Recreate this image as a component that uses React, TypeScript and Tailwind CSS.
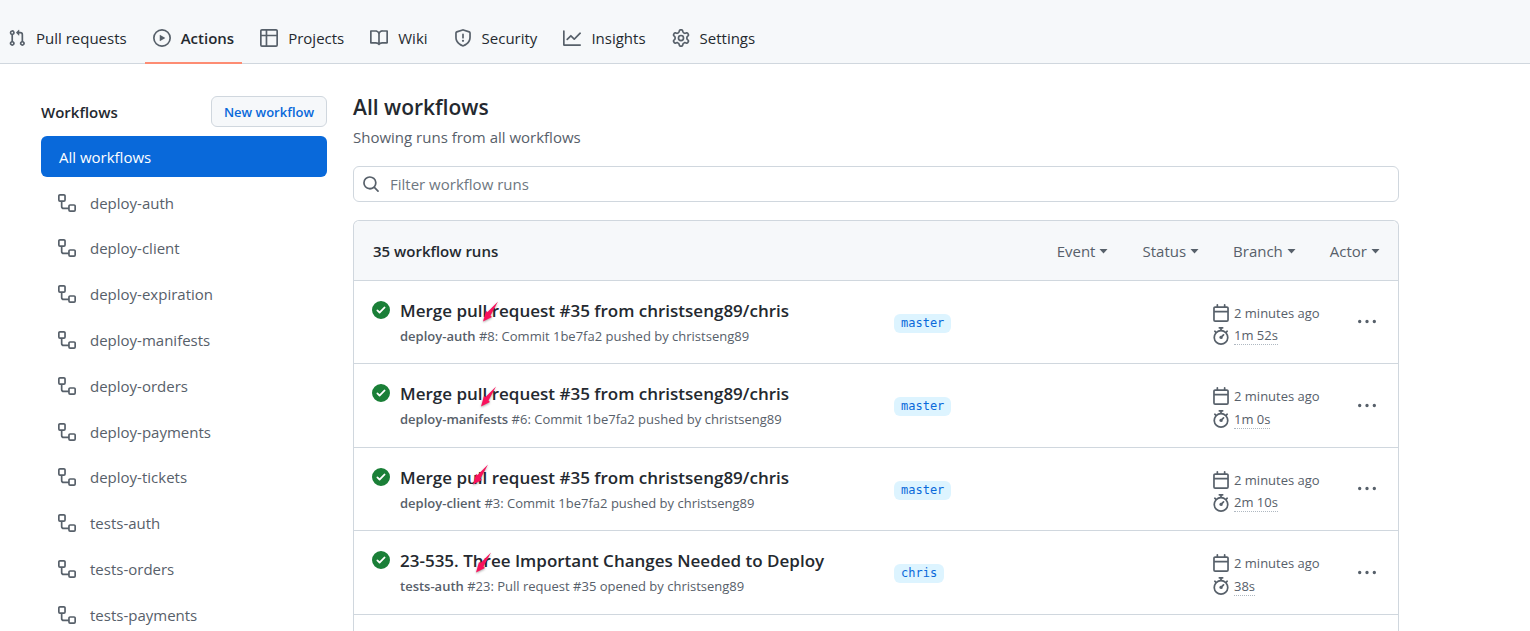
import type { ReactNode } from "react";

const icons = {
  pull: "M7.177 3.073L9.573.677A.25.25 0 0110 .854v4.792a.25.25 0 01-.427.177L7.177 3.427a.25.25 0 010-.354zM3.75 2.5a.75.75 0 100 1.5.75.75 0 000-1.5zm-2.25.75a2.25 2.25 0 113 2.122v5.256a2.251 2.251 0 11-1.5 0V5.372A2.25 2.25 0 011.5 3.25zM11 2.5h-1V4h1a1 1 0 011 1v5.628a2.251 2.251 0 101.5 0V5A2.5 2.5 0 0011 2.5zm1 10.25a.75.75 0 111.5 0 .75.75 0 01-1.5 0zM3.75 12a.75.75 0 100 1.5.75.75 0 000-1.5z",
  play: "M1.5 8a6.5 6.5 0 1113 0 6.5 6.5 0 01-13 0zM8 0a8 8 0 100 16A8 8 0 008 0zM6.379 5.227A.25.25 0 006 5.442v5.117a.25.25 0 00.379.214l4.264-2.559a.25.25 0 000-.428L6.379 5.227z",
  table: "M0 1.75C0 .784.784 0 1.75 0h12.5C15.216 0 16 .784 16 1.75v12.5A1.75 1.75 0 0 1 14.25 16H1.75A1.75 1.75 0 0 1 0 14.25ZM6.5 6.5v8h7.75a.25.25 0 0 0 .25-.25V6.5Zm8-1.5V1.75a.25.25 0 0 0-.25-.25H6.5V5Zm-13 1.5v7.75c0 .138.112.25.25.25H5v-8ZM5 5V1.5H1.75a.25.25 0 0 0-.25.25V5Z",
  book: "M0 1.75A.75.75 0 01.75 1h4.253c1.227 0 2.317.59 3 1.501A3.744 3.744 0 0111.006 1h4.245a.75.75 0 01.75.75v10.5a.75.75 0 01-.75.75h-4.507a2.25 2.25 0 00-1.591.659l-.622.621a.75.75 0 01-1.06 0l-.622-.621A2.25 2.25 0 005.258 13H.75a.75.75 0 01-.75-.75V1.75zm8.755 3a2.25 2.25 0 012.25-2.25H14.5v9h-3.757c-.71 0-1.4.201-1.992.572l.004-7.322zm-1.504 7.324l.004-5.073-.002-2.253A2.25 2.25 0 005.003 2.5H1.5v9h3.757a3.75 3.75 0 011.994.574z",
  shield: "M7.467.133a1.75 1.75 0 011.066 0l5.25 1.68A1.75 1.75 0 0115 3.48V7c0 1.566-.32 3.182-1.303 4.682-.983 1.498-2.585 2.813-5.032 3.855a1.7 1.7 0 01-1.33 0c-2.447-1.042-4.049-2.357-5.032-3.855C1.32 10.182 1 8.566 1 7V3.48a1.755 1.755 0 011.217-1.667l5.25-1.68zm.61 1.429a.25.25 0 00-.153 0l-5.25 1.68a.25.25 0 00-.174.238V7c0 1.358.275 2.666 1.057 3.86.784 1.194 2.121 2.34 4.366 3.297a.2.2 0 00.154 0c2.245-.956 3.582-2.104 4.366-3.298C13.225 9.666 13.5 8.36 13.5 7V3.48a.25.25 0 00-.174-.237l-5.25-1.68zM9 10.5a1 1 0 11-2 0 1 1 0 012 0zm-.25-5.75a.75.75 0 10-1.5 0v3a.75.75 0 001.5 0v-3z",
  graph: "M1.5 1.75a.75.75 0 00-1.5 0v12.5c0 .414.336.75.75.75h14.5a.75.75 0 000-1.5H1.5V1.75zm14.28 2.53a.75.75 0 00-1.06-1.06L10 7.94 7.53 5.47a.75.75 0 00-1.06 0L3.22 8.72a.75.75 0 001.06 1.06L7 7.06l2.47 2.47a.75.75 0 001.06 0l5.25-5.25z",
  gear: "M8 0a8.2 8.2 0 0 1 .701.031C9.444.095 9.99.645 10.16 1.29l.288 1.107c.018.066.079.158.212.224.231.114.454.243.668.386.123.082.233.09.299.071l1.103-.303c.644-.176 1.392.021 1.82.63.27.385.506.792.704 1.218.315.675.111 1.422-.364 1.891l-.814.806c-.049.048-.098.147-.088.294.016.257.016.515 0 .772-.01.147.038.246.088.294l.814.806c.475.469.679 1.216.364 1.891a7.977 7.977 0 0 1-.704 1.217c-.428.61-1.176.807-1.82.63l-1.102-.302c-.067-.019-.177-.011-.3.071a5.909 5.909 0 0 1-.668.386c-.133.066-.194.158-.211.224l-.29 1.106c-.168.646-.715 1.196-1.458 1.26a8.006 8.006 0 0 1-1.402 0c-.743-.064-1.289-.614-1.458-1.26l-.289-1.106c-.018-.066-.079-.158-.212-.224a5.738 5.738 0 0 1-.668-.386c-.123-.082-.233-.09-.299-.071l-1.103.303c-.644.176-1.392-.021-1.82-.63a8.12 8.12 0 0 1-.704-1.218c-.315-.675-.111-1.422.363-1.891l.815-.806c.05-.048.098-.147.088-.294a6.214 6.214 0 0 1 0-.772c.01-.147-.038-.246-.088-.294l-.815-.806C.635 6.045.431 5.298.746 4.623a7.92 7.92 0 0 1 .704-1.217c.428-.61 1.176-.807 1.82-.63l1.102.302c.067.019.177.011.3-.071.214-.143.437-.272.668-.386.133-.066.194-.158.211-.224l.29-1.106C6.009.645 6.556.095 7.299.03 7.53.01 7.764 0 8 0Zm-.571 1.525c-.036.003-.108.036-.137.146l-.289 1.105c-.147.561-.549.967-.998 1.189-.173.086-.34.183-.5.29-.417.278-.97.423-1.529.27l-1.103-.303c-.109-.03-.175.016-.195.045-.22.312-.412.644-.573.99-.014.031-.021.11.059.19l.815.806c.411.406.562.957.53 1.456a4.709 4.709 0 0 0 0 .582c.032.499-.119 1.05-.53 1.456l-.815.806c-.081.08-.073.159-.059.19.162.346.353.677.573.989.02.03.085.076.195.046l1.102-.303c.56-.153 1.113-.008 1.53.27.161.107.328.204.501.29.447.222.85.629.997 1.189l.289 1.105c.029.109.101.143.137.146a6.6 6.6 0 0 0 1.142 0c.036-.003.108-.036.137-.146l.289-1.105c.147-.561.549-.967.998-1.189.173-.086.34-.183.5-.29.417-.278.97-.423 1.529-.27l1.103.303c.109.029.175-.016.195-.045.22-.313.411-.644.573-.99.014-.031.021-.11-.059-.19l-.815-.806c-.411-.406-.562-.957-.53-1.456a4.709 4.709 0 0 0 0-.582c-.032-.499.119-1.05.53-1.456l.815-.806c.081-.08.073-.159.059-.19a6.464 6.464 0 0 0-.573-.989c-.02-.03-.085-.076-.195-.046l-1.102.303c-.56.153-1.113.008-1.53-.27a4.44 4.44 0 0 0-.501-.29c-.447-.222-.85-.629-.997-1.189l-.289-1.105c-.029-.11-.101-.143-.137-.146a6.6 6.6 0 0 0-1.142 0ZM11 8a3 3 0 1 1-6 0 3 3 0 0 1 6 0ZM9.5 8a1.5 1.5 0 1 0-3.001.001A1.5 1.5 0 0 0 9.5 8Z",
  workflow: "M0 1.75C0 .784.784 0 1.75 0h3.5C6.216 0 7 .784 7 1.75v3.5A1.75 1.75 0 0 1 5.25 7H4v4a1 1 0 0 0 1 1h4v-1.25C9 9.784 9.784 9 10.75 9h3.5c.966 0 1.75.784 1.75 1.75v3.5A1.75 1.75 0 0 1 14.25 16h-3.5A1.75 1.75 0 0 1 9 14.25v-.75H5A2.5 2.5 0 0 1 2.5 11V7h-.75A1.75 1.75 0 0 1 0 5.25Zm1.75-.25a.25.25 0 0 0-.25.25v3.5c0 .138.112.25.25.25h3.5a.25.25 0 0 0 .25-.25v-3.5a.25.25 0 0 0-.25-.25Zm9 9a.25.25 0 0 0-.25.25v3.5c0 .138.112.25.25.25h3.5a.25.25 0 0 0 .25-.25v-3.5a.25.25 0 0 0-.25-.25Z",
  search: "M10.68 11.74a6 6 0 0 1-7.922-8.982 6 6 0 0 1 8.982 7.922l3.04 3.04a.749.749 0 1 1-1.06 1.06ZM11.5 7a4.499 4.499 0 1 0-8.997 0A4.499 4.499 0 0 0 11.5 7Z",
  check: "M8 16A8 8 0 1 1 8 0a8 8 0 0 1 0 16Zm3.78-9.72a.751.751 0 0 0-.018-1.042.751.751 0 0 0-1.042-.018L6.75 9.19 5.28 7.72a.751.751 0 0 0-1.042.018.751.751 0 0 0-.018 1.042l2 2a.75.75 0 0 0 1.06 0Z",
  calendar: "M4.75 0a.75.75 0 0 1 .75.75V2h5V.75a.75.75 0 0 1 1.5 0V2h1.25c.966 0 1.75.784 1.75 1.75v10.5A1.75 1.75 0 0 1 13.25 16H2.75A1.75 1.75 0 0 1 1 14.25V3.75C1 2.784 1.784 2 2.75 2H4V.75A.75.75 0 0 1 4.75 0ZM2.5 7.5v6.75c0 .138.112.25.25.25h10.5a.25.25 0 0 0 .25-.25V7.5Zm10.75-4H2.75a.25.25 0 0 0-.25.25V6h11V3.75a.25.25 0 0 0-.25-.25Z",
  stopwatch: "M5.75.75A.75.75 0 0 1 6.5 0h3a.75.75 0 0 1 0 1.5h-.75v1l-.001.041a6.724 6.724 0 0 1 3.464 1.435l.007-.006.75-.75a.749.749 0 0 1 1.275.326.749.749 0 0 1-.215.734l-.75.75-.006.007a6.75 6.75 0 1 1-10.548 0L2.72 5.03l-.75-.75a.751.751 0 0 1 .018-1.042.751.751 0 0 1 1.042-.018l.75.75.007.006A6.72 6.72 0 0 1 7.25 2.541V1.5H6.5a.75.75 0 0 1-.75-.75ZM8 14.5a5.25 5.25 0 1 0-.001-10.501A5.25 5.25 0 0 0 8 14.5Zm.389-6.7 1.33-1.33a.75.75 0 1 1 1.061 1.06L9.45 8.861A1.503 1.503 0 0 1 8 10.75a1.499 1.499 0 1 1 .389-2.95Z",
  kebab: "M8 9a1.5 1.5 0 1 0 0-3 1.5 1.5 0 0 0 0 3ZM1.5 9a1.5 1.5 0 1 0 0-3 1.5 1.5 0 0 0 0 3Zm13 0a1.5 1.5 0 1 0 0-3 1.5 1.5 0 0 0 0 3Z",
};

type IconName = keyof typeof icons;

function Icon({ name, className = "text-[#57606a]" }: { name: IconName; className?: string }) {
  return (
    <svg viewBox="0 0 16 16" width="18" height="18" fill="currentColor" aria-hidden="true" className={`shrink-0 ${className}`}>
      <path d={icons[name]} fillRule="evenodd" />
    </svg>
  );
}

const tabs: { icon: IconName; label: string }[] = [
  { icon: "pull", label: "Pull requests" },
  { icon: "play", label: "Actions" },
  { icon: "table", label: "Projects" },
  { icon: "book", label: "Wiki" },
  { icon: "shield", label: "Security" },
  { icon: "graph", label: "Insights" },
  { icon: "gear", label: "Settings" },
];

const workflows = [
  "deploy-auth",
  "deploy-client",
  "deploy-expiration",
  "deploy-manifests",
  "deploy-orders",
  "deploy-payments",
  "deploy-tickets",
  "tests-auth",
  "tests-orders",
  "tests-payments",
];

const merge = "Merge pull request #35 from christseng89/chris";

const runs = [
  { title: merge, workflow: "deploy-auth", detail: "#8: Commit 1be7fa2 pushed by christseng89", branch: "master", time: "1m 52s", mark: "left-[82px] top-[19px]" },
  { title: merge, workflow: "deploy-manifests", detail: "#6: Commit 1be7fa2 pushed by christseng89", branch: "master", time: "1m 0s", mark: "left-[80px] top-[21px]" },
  { title: merge, workflow: "deploy-client", detail: "#3: Commit 1be7fa2 pushed by christseng89", branch: "master", time: "2m 10s", mark: "left-[72px] top-[15px]" },
  { title: "23-535. Three Important Changes Needed to Deploy", workflow: "tests-auth", detail: "#23: Pull request #35 opened by christseng89", branch: "chris", time: "38s", mark: "left-[75px] top-[20px]" },
];

function Arrow({ className }: { className: string }) {
  return (
    <svg viewBox="0 0 18 24" width="18" height="24" aria-hidden="true" className={`absolute drop-shadow-[0_1px_1px_rgba(0,0,0,0.35)] ${className}`}>
      <path d="M16 1.500 L5.500 12 L4 11 L1 21.500 L10 17 L8.500 15.500 Z" fill="#f8125c" />
    </svg>
  );
}

function Filter({ children }: { children: ReactNode }) {
  return (
    <button type="button" className="flex items-center gap-1">
      {children}
      <svg viewBox="0 0 9 5" width="9" height="5" fill="currentColor" aria-hidden="true" className="mt-0.5">
        <path d="M0.500 0h8L4.500 4.500z" />
      </svg>
    </button>
  );
}

export default function App() {
  return (
    <div className="flex h-screen flex-col overflow-hidden bg-white font-['Open_Sans',sans-serif] text-[15px] leading-6 text-[#24292f]">
      <nav aria-label="Repository" className="flex h-16 shrink-0 items-end gap-2.5 border-b border-[#d0d7de] bg-[#f6f8fa]">
        {tabs.map((tab) => {
          const active = tab.label === "Actions";
          return (
            <a
              key={tab.label}
              href={`#${tab.label.toLowerCase().replace(" ", "-")}`}
              aria-current={active ? "page" : undefined}
              className={`-mb-px flex h-[50px] items-center gap-2.5 border-b-2 px-2 whitespace-nowrap ${active ? "border-[#fd8c73] font-semibold" : "border-transparent"}`}
            >
              <Icon name={tab.icon} />
              {tab.label}
            </a>
          );
        })}
      </nav>

      <div className="flex min-h-0 flex-1">
        <aside className="w-[327px] shrink-0 pt-8 pl-[41px]">
          <div className="mb-[9px] flex h-[31px] items-center justify-between">
            <h2 className="font-semibold">Workflows</h2>
            <button type="button" className="h-[31px] rounded-md border border-[#d0d7de] bg-[#f6f8fa] px-3 text-[13px] leading-5 font-semibold text-[#0969da]">
              New workflow
            </button>
          </div>
          <nav aria-label="Workflows" className="flex flex-col gap-[5px]">
            <a href="#all" aria-current="page" className="flex h-[41px] items-center rounded-md bg-[#0969da] px-[18px] text-white">
              All workflows
            </a>
            {workflows.map((name) => (
              <a key={name} href={`#${name}`} className="flex h-[41px] items-center gap-3.5 px-[17px] text-[#57606a] nth-[5n+3]:h-10">
                <Icon name="workflow" />
                {name}
              </a>
            ))}
          </nav>
        </aside>

        <main className="flex min-w-0 flex-1 flex-col pt-[29px] pr-[131px] pl-[26px]">
          <h1 className="text-[21px] leading-7 font-semibold">All workflows</h1>
          <p className="mt-1 text-[#57606a]">Showing runs from all workflows</p>
          <div className="mt-[17px] flex h-9 shrink-0 items-center gap-2.5 rounded-md border border-[#d0d7de] px-2">
            <Icon name="search" />
            <input type="text" aria-label="Filter workflow runs" placeholder="Filter workflow runs" className="min-w-0 flex-1 outline-none placeholder:text-[#6e7781]" />
          </div>

          <section className="mt-[18px] flex min-h-0 flex-1 flex-col rounded-t-md border border-b-0 border-[#d0d7de]">
            <header className="flex h-[60px] shrink-0 items-center justify-between rounded-t-md border-b border-[#d0d7de] bg-[#f6f8fa] pr-[18px] pl-[19px]">
              <strong className="font-semibold">35 workflow runs</strong>
              <div className="flex gap-[34px] text-[#57606a]">
                <Filter>Event</Filter>
                <Filter>Status</Filter>
                <Filter>Branch</Filter>
                <Filter>Actor</Filter>
              </div>
            </header>
            <ul>
              {runs.map((run) => (
                <li key={run.workflow} className="flex h-[83px] items-center border-b border-[#d0d7de] pr-[22px] pl-[18px] text-[13px] leading-5 text-[#57606a] even:h-[84px]">
                  <Icon name="check" className="mt-5 self-start text-[#1a7f37]" />
                  <div className="relative ml-2.5 w-[494px] self-start pt-[17px]">
                    <a href={`#${run.workflow}-run`} className="block text-[17px] leading-[26px] font-semibold whitespace-nowrap text-[#24292f]">
                      {run.title}
                    </a>
                    <p className="mt-0.5">
                      <span className="font-semibold">{run.workflow}</span> {run.detail}
                    </p>
                    <Arrow className={run.mark} />
                  </div>
                  <a href={`#${run.branch}`} className="mt-0.5 rounded-md bg-[#ddf4ff] px-[7px] font-['DejaVu_Sans_Mono',monospace] text-xs leading-[19px] text-[#0969da]">
                    {run.branch}
                  </a>
                  <div className="ml-auto w-[146px] pt-1">
                    <div className="flex h-[23px] items-center gap-1">
                      <Icon name="calendar" />
                      2 minutes ago
                    </div>
                    <div className="flex h-[23px] items-center gap-1">
                      <Icon name="stopwatch" />
                      <span className="border-b border-dotted border-[#afb8c1] leading-[18px]">{run.time}</span>
                    </div>
                  </div>
                  <button type="button" aria-label="Show options">
                    <Icon name="kebab" />
                  </button>
                </li>
              ))}
            </ul>
          </section>
        </main>
      </div>
    </div>
  );
}
